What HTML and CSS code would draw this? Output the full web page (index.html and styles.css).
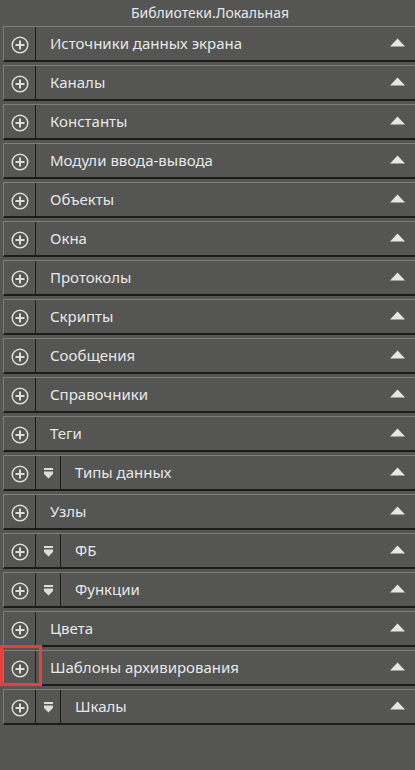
FILE: index.html
```html
<!DOCTYPE html>
<html lang="ru">
<head>
<meta charset="utf-8">
<title>Библиотеки.Локальная</title>
<link rel="stylesheet" href="styles.css">
</head>
<body>
<div class="panel">
  <div class="title">Библиотеки.Локальная</div>
  <div class="list">
    <div class="row"><div class="add"><svg width="18" height="18" viewBox="0 0 18 18"><circle cx="9" cy="9" r="7.8" fill="none" stroke="#dcdcdc" stroke-width="1.5"/><path d="M9 4.5V13.5M4.5 9H13.5" stroke="#dcdcdc" stroke-width="2"/></svg></div><div class="label">Источники данных экрана</div><div class="toggle"><svg width="15" height="9" viewBox="0 0 15 9"><polygon points="0,8.5 7.5,0.5 15,8.5" fill="#e6e6e6"/></svg></div></div>
    <div class="row"><div class="add"><svg width="18" height="18" viewBox="0 0 18 18"><circle cx="9" cy="9" r="7.8" fill="none" stroke="#dcdcdc" stroke-width="1.5"/><path d="M9 4.5V13.5M4.5 9H13.5" stroke="#dcdcdc" stroke-width="2"/></svg></div><div class="label">Каналы</div><div class="toggle"><svg width="15" height="9" viewBox="0 0 15 9"><polygon points="0,8.5 7.5,0.5 15,8.5" fill="#e6e6e6"/></svg></div></div>
    <div class="row"><div class="add"><svg width="18" height="18" viewBox="0 0 18 18"><circle cx="9" cy="9" r="7.8" fill="none" stroke="#dcdcdc" stroke-width="1.5"/><path d="M9 4.5V13.5M4.5 9H13.5" stroke="#dcdcdc" stroke-width="2"/></svg></div><div class="label">Константы</div><div class="toggle"><svg width="15" height="9" viewBox="0 0 15 9"><polygon points="0,8.5 7.5,0.5 15,8.5" fill="#e6e6e6"/></svg></div></div>
    <div class="row"><div class="add"><svg width="18" height="18" viewBox="0 0 18 18"><circle cx="9" cy="9" r="7.8" fill="none" stroke="#dcdcdc" stroke-width="1.5"/><path d="M9 4.5V13.5M4.5 9H13.5" stroke="#dcdcdc" stroke-width="2"/></svg></div><div class="label">Модули ввода-вывода</div><div class="toggle"><svg width="15" height="9" viewBox="0 0 15 9"><polygon points="0,8.5 7.5,0.5 15,8.5" fill="#e6e6e6"/></svg></div></div>
    <div class="row"><div class="add"><svg width="18" height="18" viewBox="0 0 18 18"><circle cx="9" cy="9" r="7.8" fill="none" stroke="#dcdcdc" stroke-width="1.5"/><path d="M9 4.5V13.5M4.5 9H13.5" stroke="#dcdcdc" stroke-width="2"/></svg></div><div class="label">Объекты</div><div class="toggle"><svg width="15" height="9" viewBox="0 0 15 9"><polygon points="0,8.5 7.5,0.5 15,8.5" fill="#e6e6e6"/></svg></div></div>
    <div class="row"><div class="add"><svg width="18" height="18" viewBox="0 0 18 18"><circle cx="9" cy="9" r="7.8" fill="none" stroke="#dcdcdc" stroke-width="1.5"/><path d="M9 4.5V13.5M4.5 9H13.5" stroke="#dcdcdc" stroke-width="2"/></svg></div><div class="label">Окна</div><div class="toggle"><svg width="15" height="9" viewBox="0 0 15 9"><polygon points="0,8.5 7.5,0.5 15,8.5" fill="#e6e6e6"/></svg></div></div>
    <div class="row"><div class="add"><svg width="18" height="18" viewBox="0 0 18 18"><circle cx="9" cy="9" r="7.8" fill="none" stroke="#dcdcdc" stroke-width="1.5"/><path d="M9 4.5V13.5M4.5 9H13.5" stroke="#dcdcdc" stroke-width="2"/></svg></div><div class="label">Протоколы</div><div class="toggle"><svg width="15" height="9" viewBox="0 0 15 9"><polygon points="0,8.5 7.5,0.5 15,8.5" fill="#e6e6e6"/></svg></div></div>
    <div class="row"><div class="add"><svg width="18" height="18" viewBox="0 0 18 18"><circle cx="9" cy="9" r="7.8" fill="none" stroke="#dcdcdc" stroke-width="1.5"/><path d="M9 4.5V13.5M4.5 9H13.5" stroke="#dcdcdc" stroke-width="2"/></svg></div><div class="label">Скрипты</div><div class="toggle"><svg width="15" height="9" viewBox="0 0 15 9"><polygon points="0,8.5 7.5,0.5 15,8.5" fill="#e6e6e6"/></svg></div></div>
    <div class="row"><div class="add"><svg width="18" height="18" viewBox="0 0 18 18"><circle cx="9" cy="9" r="7.8" fill="none" stroke="#dcdcdc" stroke-width="1.5"/><path d="M9 4.5V13.5M4.5 9H13.5" stroke="#dcdcdc" stroke-width="2"/></svg></div><div class="label">Сообщения</div><div class="toggle"><svg width="15" height="9" viewBox="0 0 15 9"><polygon points="0,8.5 7.5,0.5 15,8.5" fill="#e6e6e6"/></svg></div></div>
    <div class="row"><div class="add"><svg width="18" height="18" viewBox="0 0 18 18"><circle cx="9" cy="9" r="7.8" fill="none" stroke="#dcdcdc" stroke-width="1.5"/><path d="M9 4.5V13.5M4.5 9H13.5" stroke="#dcdcdc" stroke-width="2"/></svg></div><div class="label">Справочники</div><div class="toggle"><svg width="15" height="9" viewBox="0 0 15 9"><polygon points="0,8.5 7.5,0.5 15,8.5" fill="#e6e6e6"/></svg></div></div>
    <div class="row"><div class="add"><svg width="18" height="18" viewBox="0 0 18 18"><circle cx="9" cy="9" r="7.8" fill="none" stroke="#dcdcdc" stroke-width="1.5"/><path d="M9 4.5V13.5M4.5 9H13.5" stroke="#dcdcdc" stroke-width="2"/></svg></div><div class="label">Теги</div><div class="toggle"><svg width="15" height="9" viewBox="0 0 15 9"><polygon points="0,8.5 7.5,0.5 15,8.5" fill="#e6e6e6"/></svg></div></div>
    <div class="row"><div class="add"><svg width="18" height="18" viewBox="0 0 18 18"><circle cx="9" cy="9" r="7.8" fill="none" stroke="#dcdcdc" stroke-width="1.5"/><path d="M9 4.5V13.5M4.5 9H13.5" stroke="#dcdcdc" stroke-width="2"/></svg></div><div class="filter"><svg width="9" height="11" viewBox="0 0 9 11"><rect x="0" y="0" width="9" height="2" fill="#dcdcdc"/><path d="M0 3.5H9V6L4.5 10.5L0 6Z" fill="#dcdcdc"/></svg></div><div class="label">Типы данных</div><div class="toggle"><svg width="15" height="9" viewBox="0 0 15 9"><polygon points="0,8.5 7.5,0.5 15,8.5" fill="#e6e6e6"/></svg></div></div>
    <div class="row"><div class="add"><svg width="18" height="18" viewBox="0 0 18 18"><circle cx="9" cy="9" r="7.8" fill="none" stroke="#dcdcdc" stroke-width="1.5"/><path d="M9 4.5V13.5M4.5 9H13.5" stroke="#dcdcdc" stroke-width="2"/></svg></div><div class="label">Узлы</div><div class="toggle"><svg width="15" height="9" viewBox="0 0 15 9"><polygon points="0,8.5 7.5,0.5 15,8.5" fill="#e6e6e6"/></svg></div></div>
    <div class="row"><div class="add"><svg width="18" height="18" viewBox="0 0 18 18"><circle cx="9" cy="9" r="7.8" fill="none" stroke="#dcdcdc" stroke-width="1.5"/><path d="M9 4.5V13.5M4.5 9H13.5" stroke="#dcdcdc" stroke-width="2"/></svg></div><div class="filter"><svg width="9" height="11" viewBox="0 0 9 11"><rect x="0" y="0" width="9" height="2" fill="#dcdcdc"/><path d="M0 3.5H9V6L4.5 10.5L0 6Z" fill="#dcdcdc"/></svg></div><div class="label">ФБ</div><div class="toggle"><svg width="15" height="9" viewBox="0 0 15 9"><polygon points="0,8.5 7.5,0.5 15,8.5" fill="#e6e6e6"/></svg></div></div>
    <div class="row"><div class="add"><svg width="18" height="18" viewBox="0 0 18 18"><circle cx="9" cy="9" r="7.8" fill="none" stroke="#dcdcdc" stroke-width="1.5"/><path d="M9 4.5V13.5M4.5 9H13.5" stroke="#dcdcdc" stroke-width="2"/></svg></div><div class="filter"><svg width="9" height="11" viewBox="0 0 9 11"><rect x="0" y="0" width="9" height="2" fill="#dcdcdc"/><path d="M0 3.5H9V6L4.5 10.5L0 6Z" fill="#dcdcdc"/></svg></div><div class="label">Функции</div><div class="toggle"><svg width="15" height="9" viewBox="0 0 15 9"><polygon points="0,8.5 7.5,0.5 15,8.5" fill="#e6e6e6"/></svg></div></div>
    <div class="row"><div class="add"><svg width="18" height="18" viewBox="0 0 18 18"><circle cx="9" cy="9" r="7.8" fill="none" stroke="#dcdcdc" stroke-width="1.5"/><path d="M9 4.5V13.5M4.5 9H13.5" stroke="#dcdcdc" stroke-width="2"/></svg></div><div class="label">Цвета</div><div class="toggle"><svg width="15" height="9" viewBox="0 0 15 9"><polygon points="0,8.5 7.5,0.5 15,8.5" fill="#e6e6e6"/></svg></div></div>
    <div class="row"><div class="add highlighted"><svg width="18" height="18" viewBox="0 0 18 18"><circle cx="9" cy="9" r="7.8" fill="none" stroke="#dcdcdc" stroke-width="1.5"/><path d="M9 4.5V13.5M4.5 9H13.5" stroke="#dcdcdc" stroke-width="2"/></svg><span class="mark"></span></div><div class="label">Шаблоны архивирования</div><div class="toggle"><svg width="15" height="9" viewBox="0 0 15 9"><polygon points="0,8.5 7.5,0.5 15,8.5" fill="#e6e6e6"/></svg></div></div>
    <div class="row"><div class="add"><svg width="18" height="18" viewBox="0 0 18 18"><circle cx="9" cy="9" r="7.8" fill="none" stroke="#dcdcdc" stroke-width="1.5"/><path d="M9 4.5V13.5M4.5 9H13.5" stroke="#dcdcdc" stroke-width="2"/></svg></div><div class="filter"><svg width="9" height="11" viewBox="0 0 9 11"><rect x="0" y="0" width="9" height="2" fill="#dcdcdc"/><path d="M0 3.5H9V6L4.5 10.5L0 6Z" fill="#dcdcdc"/></svg></div><div class="label">Шкалы</div><div class="toggle"><svg width="15" height="9" viewBox="0 0 15 9"><polygon points="0,8.5 7.5,0.5 15,8.5" fill="#e6e6e6"/></svg></div></div>
  </div>
</div>
</body>
</html>
```

FILE: styles.css
```css
html, body {
  margin: 0;
  padding: 0;
  background: #555553;
}
.panel {
  width: 415px;
  height: 770px;
  background: #555553;
  font-family: "Noto Sans", "Open Sans", sans-serif;
  color: #e6e8ea;
}
.title {
  height: 26px;
  line-height: 26px;
  text-align: center;
  font-size: 14px;
  padding-left: 5px;
}
.list {
  padding-left: 3px;
  display: flex;
  flex-direction: column;
  gap: 3px;
}
.row {
  display: flex;
  align-items: stretch;
  height: 33px;
  border-top: 1px solid #7d7d7b;
  border-left: 1px solid #7d7d7b;
  border-bottom: 2px solid #1c1c1c;
}
.add {
  position: relative;
  width: 32px;
  flex: none;
  display: flex;
  align-items: center;
  justify-content: center;
  border-right: 1px solid #1c1c1c;
  padding-top: 2px;
  box-sizing: border-box;
}
.add svg { display: block; }
.mark {
  position: absolute;
  left: -4px;
  top: -6px;
  width: 42px;
  height: 41px;
  border: 3px solid #e8403f;
  box-sizing: border-box;
}
.filter {
  width: 25px;
  flex: none;
  display: flex;
  align-items: center;
  justify-content: center;
  border-right: 1px solid #1c1c1c;
  padding-top: 1px;
  box-sizing: border-box;
}
.filter svg { display: block; }
.label {
  flex: 1;
  display: flex;
  align-items: center;
  padding-left: 14px;
  padding-bottom: 1px;
  font-size: 15px;
  white-space: nowrap;
}
.toggle {
  width: 15px;
  flex: none;
  display: flex;
  align-items: center;
  margin-right: 10px;
  padding-bottom: 3px;
}
.toggle svg { display: block; }
```
